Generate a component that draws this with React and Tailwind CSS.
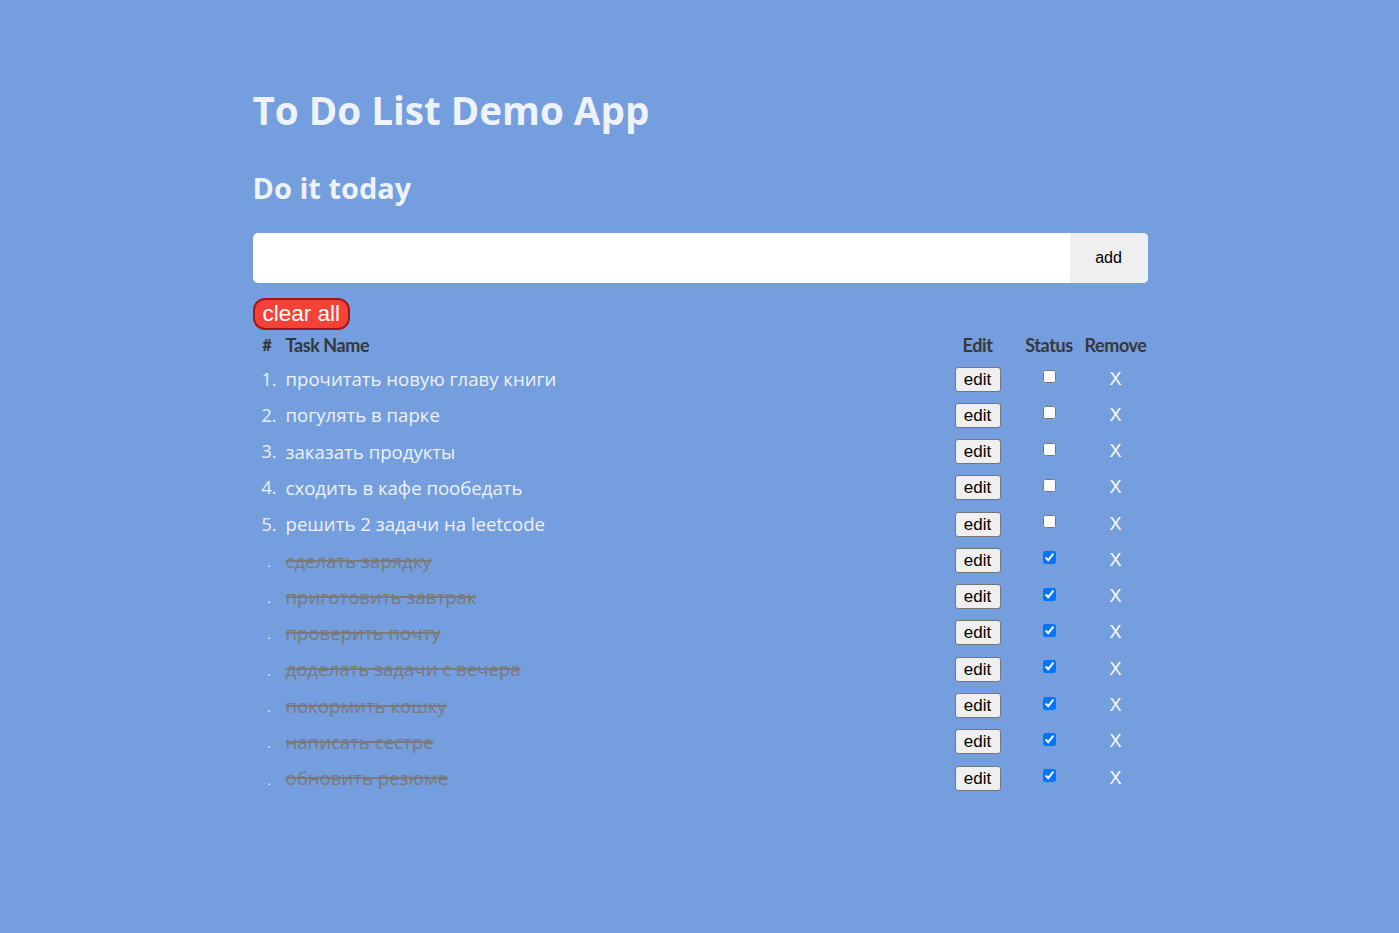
const tasks = [
  { name: 'прочитать новую главу книги', done: false },
  { name: 'погулять в парке', done: false },
  { name: 'заказать продукты', done: false },
  { name: 'сходить в кафе пообедать', done: false },
  { name: 'решить 2 задачи на leetcode', done: false },
  { name: 'сделать зарядку', done: true },
  { name: 'приготовить завтрак', done: true },
  { name: 'проверить почту', done: true },
  { name: 'доделать задачи с вечера', done: true },
  { name: 'покормить кошку', done: true },
  { name: 'написать сестре', done: true },
  { name: 'обновить резюме', done: true },
];

const grid = 'grid grid-cols-[33px_1fr_74px_68px_65px] items-center';

function Row({ task, index }) {
  return (
    <div className={`${grid} h-[36.27px]`}>
      <div className="pl-[9px] text-[18px] text-[#eef2fb]">
        {task.done ? <span className="pl-[6px] text-[12px] text-white">.</span> : `${index + 1}.`}
      </div>
      <div
        className={
          task.done
            ? 'text-[18.6px] text-[#7a7a7a] line-through decoration-[#7a7a7a] decoration-2'
            : 'text-[18.6px] text-[#eef2fb]'
        }
      >
        {task.name}
      </div>
      <div className="flex justify-center">
        <button className="h-[25px] w-[46px] rounded-[3px] border border-[#767676] bg-[#efefef] font-['Liberation_Sans',sans-serif] text-[17px] leading-none text-black">
          edit
        </button>
      </div>
      <div className="flex justify-center pl-[1px]">
        <input
          type="checkbox"
          defaultChecked={task.done}
          className="mb-[5px] h-[13px] w-[13px] accent-[#0075ff]"
        />
      </div>
      <div className="flex justify-center pl-[1px] font-['Liberation_Sans',sans-serif] text-[18px] text-white">
        X
      </div>
    </div>
  );
}

export default function App() {
  return (
    <div className="flex min-h-[933px] justify-center bg-[#749ede] pl-[1px] font-['Open_Sans','Noto_Sans',sans-serif]">
      <div className="w-[895px] pt-[80px]">
        <h1 className="text-[38.6px] font-bold leading-[60px] text-[#eef2fb]">To Do List Demo App</h1>
        <h2 className="mt-[28px] text-[29px] font-bold leading-[40px] text-[#eef2fb]">Do it today</h2>

        <div className="mt-[25px] flex h-[50px] overflow-hidden rounded-[5px] bg-white">
          <input className="flex-1 px-3 text-[16px] outline-none" />
          <button className="w-[78px] bg-[#efefef] font-['Liberation_Sans',sans-serif] text-[16px] text-black">
            add
          </button>
        </div>

        <button className="mt-[15px] h-[32px] rounded-[12px] border-2 border-[#a3161a] bg-[#f44336] px-[8px] font-['Liberation_Sans',sans-serif] text-[22.5px] leading-none text-white">
          clear all
        </button>

        <div className={`${grid} h-[30px] font-['Lato',sans-serif] text-[18px] font-bold tracking-[-0.4px] text-[#383838]`}>
          <div className="pl-[10px] text-[16px] font-black">#</div>
          <div>Task Name</div>
          <div className="text-center">Edit</div>
          <div className="pl-[1px] text-center">Status</div>
          <div className="pl-[1px] text-center">Remove</div>
        </div>

        <div className="pt-[1px]">
          {tasks.map((t, i) => (
            <Row key={t.name} task={t} index={i} />
          ))}
        </div>
      </div>
    </div>
  );
}
